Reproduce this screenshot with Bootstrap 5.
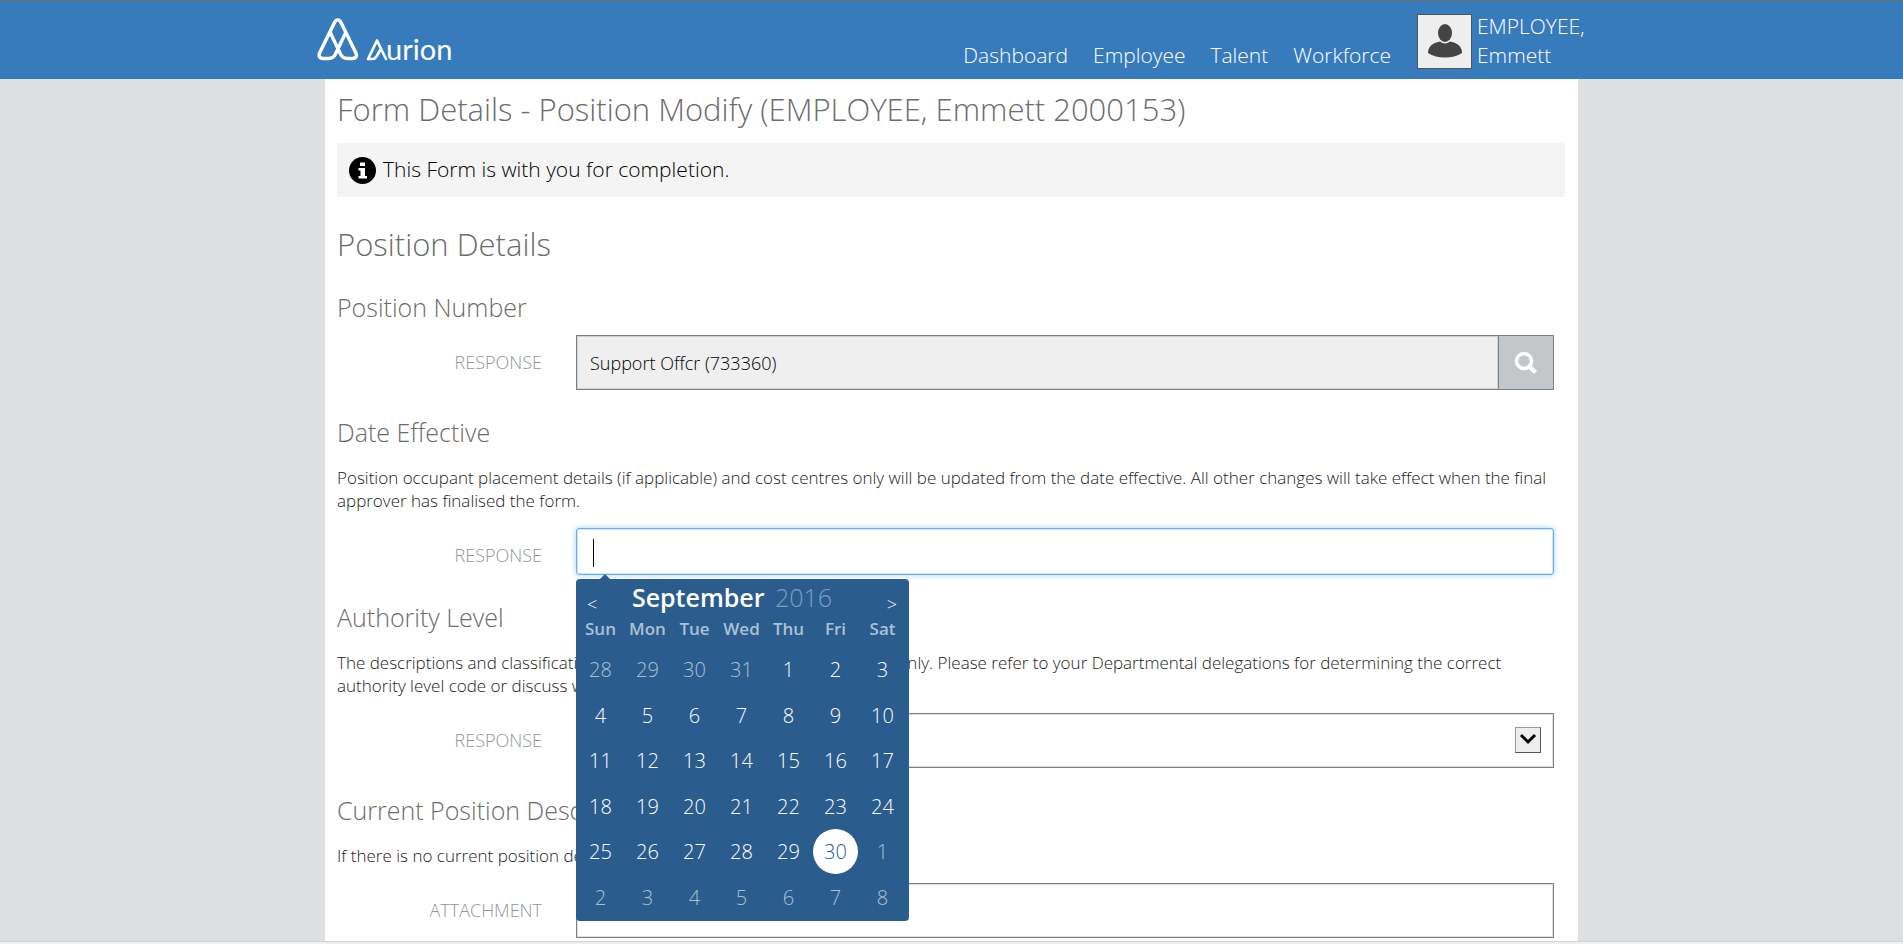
<!DOCTYPE html>
<html lang="en">
<head>
<meta charset="utf-8">
<meta name="viewport" content="width=device-width, initial-scale=1">
<title>Form Details - Position Modify</title>
<link href="https://cdn.jsdelivr.net/npm/bootstrap@5.3.0/dist/css/bootstrap.min.css" rel="stylesheet">
<style>
body{font-family:"Open Sans","Noto Sans",sans-serif;font-weight:300;background:#dedfe1;color:#222}
.site-bar{background:#387bbd;border-top:1px solid #6f6f6f;height:79px}
.wrap{width:100%;max-width:1253px}
.brand-link{color:#fff;margin:16px 0 0 -8px}
.brand-link svg{display:block}
.main-links{gap:25px;margin-right:26px;padding-top:40px}
.main-links a,.who{font-size:21px;line-height:29px;color:#fff;text-decoration:none}
.who{width:108px;margin-right:-7px;padding-top:11px}
.avatar{width:55px;height:55px;background:#eee;border:1px solid #555;margin:13px 5px 0 0}
.sheet{background:#fff;padding:0 13px 0 12px}
h1,h2,h3{color:#6c6c6c;font-weight:300;margin:0}
h1,h2{font-size:31px;line-height:44px}
h3{font-size:25px;line-height:36px}
h1{padding:8px 0 12px}
.notice{background:#f4f4f4;color:#000;font-size:21px;height:54px;padding:0 12px;gap:7px}
h2{margin:25px 0 23px}
.section p{font-size:17px;line-height:23px;margin:16px 0}
.section h3+.answer{margin-top:10px}
.section{margin-bottom:24px}
.answer{padding-right:11px}
.answer-label{width:239px;padding-right:34px;text-align:right;font-size:18px;color:#8f9599}
.answer-box{min-width:0}
.answer .form-control,.answer .form-select{height:55px;font-size:18px;font-weight:300;color:#000;border:1px solid #77818a;border-radius:0;padding:0 13px;box-shadow:inset 0 0 0 1px #dde0e3;background-color:#fff}
.answer .form-control[readonly]{background:#efefef;box-shadow:inset 0 0 0 1px #cfd2d4}
.answer .form-control.active-date{height:47px;border-color:#66afe9;border-radius:3px;box-shadow:inset 0 0 0 1px #d3e6f7,0 0 6px #a9d3f5}
.lookup{width:56px;background:#c3c7ca;border:1px solid #77818a;border-left:0;padding:0}
.answer .form-select{background-image:none}
.drop{position:absolute;right:13px;top:14px;width:26px;height:26px;pointer-events:none;background:#eee;border:1px solid #999;border-right-color:#555;border-bottom-color:#555}
.caret-line{position:absolute;left:17px;top:11px;width:1px;height:28px;background:#000}
.datepick{position:absolute;left:0;top:51px;z-index:5;width:333px;background:#2a5c8d;border-radius:4px;color:#fff;padding:0 2px 1px 1px}
.datepick::before{content:"";position:absolute;left:24px;top:-5px;border:5px solid transparent;border-top:0;border-bottom-color:#2a5c8d}
.month-row{height:36px;padding:0 10px}
.month-row button{background:none;border:0;color:#fff;padding:7px 0 0;font-size:18px;font-weight:300;line-height:36px}
.month-name{font-size:25px;line-height:37px;padding-right:20px}
.month-name b{font-weight:600;margin-right:4px}
.month-name span{color:#7f9fbe}
.days{width:329px;table-layout:fixed;margin:0;text-align:center;color:#fff}
.days th{font-size:17px;line-height:27px;font-weight:600;color:#abc1d6;padding:0}
.days tbody{border-top:5px solid #2a5c8d}
.days td{padding:0;height:45px}
.days tr:nth-child(even) td{height:46px}
.days td button{display:block;width:45px;height:45px;font-size:20px;line-height:45px;margin:0 auto;background:none;border:0;border-radius:50%;color:#fff;padding:0;font-weight:300}
.days td button.off{color:#a9c0d6}
.days td button.picked{background:#fff;color:#2a5c8d}
.status-strip{height:3px;background:#efefef;border-top:1px solid #d4d4d4}
.section.last-section{margin-bottom:2px}
</style>
</head>
<body class="d-flex flex-column min-vh-100">
<header class="site-bar">
  <div class="wrap mx-auto d-flex">
    <a href="#" class="brand-link me-auto" aria-label="Aurion">
      <svg width="136" height="50" viewBox="0 0 136 50" fill="none" stroke="#fff" stroke-linejoin="round" stroke-linecap="round">
        <path stroke-width="3.4" d="M17.5 5.5 2.8 35.5c-1.500 3.500-.5 6 3.200 6H12c3.500 0 5-1.500 6.500-4.500L28.500 16M24 5.500 38.700 35.500c1.500 3.500.5 6-3.200 6H30c-3.500 0-5-1.500-6.500-4.500L13.500 16M17.500 5.500c1.500-3.500 5-3.500 6.500 0"/>
        <path stroke-width="2.600" d="M69 42 60 23.500 51 42H55.500c2 0 3-1 4-2.500l4-7"/>
        <text x="69" y="43" fill="#fff" stroke="none" font-family="Lato, sans-serif" font-weight="400" font-size="29">urion</text>
      </svg>
    </a>
    <nav class="main-links d-flex">
      <a href="#">Dashboard</a><a href="#">Employee</a><a href="#">Talent</a><a href="#">Workforce</a>
    </nav>
    <svg class="avatar flex-shrink-0" viewBox="0 0 53 53" role="img" aria-label="Profile photo"><ellipse cx="27" cy="18" rx="7" ry="9" fill="#444"/><path fill="#444" d="M10 38c0-6 4-10 12-11.500 3 2.500 7 2.500 10 0 8 1.500 12 5.500 12 11.500-9 6-25 6-34 0z"/></svg>
    <a href="#" class="who">EMPLOYEE, Emmett</a>
  </div>
</header>
<main class="sheet wrap mx-auto flex-grow-1">
  <h1>Form Details - Position Modify (EMPLOYEE, Emmett 2000153)</h1>
  <div class="notice d-flex align-items-center" role="status">
    <svg width="27" height="27" viewBox="0 0 27 27"><circle cx="13.500" cy="13.500" r="13.500"/><path fill="#fff" d="M11 5.500h5v3.500h-5zM9.500 11h6.500v8h2v2.500H9.500V19h2v-5.500h-2z"/></svg>
    <span>This Form is with you for completion.</span>
  </div>
  <h2>Position Details</h2>

  <section class="section">
    <h3>Position Number</h3>
    <div class="answer d-flex align-items-center">
      <label class="answer-label flex-shrink-0" for="posNo">RESPONSE</label>
      <div class="answer-box input-group flex-grow-1">
        <input id="posNo" class="form-control" type="text" readonly value="Support Offcr (733360)">
        <button class="lookup" type="button" aria-label="Search"><svg width="24" height="24" viewBox="0 0 24 24" fill="none" stroke="#fff"><circle cx="10" cy="10" r="7.500" stroke-width="3.500"/><path d="m15.500 15.500 6 6" stroke-width="4.500"/></svg></button>
      </div>
    </div>
  </section>

  <section class="section">
    <h3>Date Effective</h3>
    <p>Position occupant placement details (if applicable) and cost centres only will be updated from the date effective. All other changes will take effect when the final approver has finalised the form.</p>
    <div class="answer d-flex align-items-center">
      <label class="answer-label flex-shrink-0 pt-2" for="dateEff">RESPONSE</label>
      <div class="answer-box position-relative flex-grow-1">
        <input id="dateEff" class="form-control active-date" type="text">
        <span class="caret-line"></span>
        <div class="datepick">
          <div class="month-row d-flex justify-content-between">
            <button type="button" aria-label="Previous month">&lt;</button>
            <div class="month-name"><b>September</b> <span>2016</span></div>
            <button type="button" aria-label="Next month">&gt;</button>
          </div>
          <table class="days">
            <thead><tr><th>Sun</th><th>Mon</th><th>Tue</th><th>Wed</th><th>Thu</th><th>Fri</th><th>Sat</th></tr></thead>
            <tbody id="dayRows"></tbody>
          </table>
        </div>
      </div>
    </div>
  </section>

  <section class="section">
    <h3>Authority Level</h3>
    <p>The descriptions and classifications shown below are provided as a guide only. Please refer to your Departmental delegations for determining the correct authority level code or discuss with your manager.</p>
    <div class="answer d-flex align-items-center">
      <label class="answer-label flex-shrink-0" for="authLevel">RESPONSE</label>
      <div class="answer-box position-relative flex-grow-1">
        <select id="authLevel" class="form-select"><option></option></select>
        <svg class="drop" viewBox="0 0 24 24" fill="none" stroke="#000" stroke-width="3"><path d="m5 7 7 7 7-7"/></svg>
      </div>
    </div>
  </section>

  <section class="section last-section">
    <h3>Current Position Description</h3>
    <p>If there is no current position description, please add one.</p>
    <div class="answer d-flex align-items-center">
      <label class="answer-label flex-shrink-0" for="attach">ATTACHMENT</label>
      <div class="answer-box flex-grow-1"><input id="attach" class="form-control" type="text"></div>
    </div>
  </section>
</main>
<footer class="status-strip"></footer>
<script>
// Six weeks from Sunday 28 August 2016
const rows = document.getElementById('dayRows');
const day = new Date(2016, 7, 28);
for (let w = 0; w < 6; w++) {
  const tr = rows.insertRow();
  for (let d = 0; d < 7; d++) {
    const b = document.createElement('button');
    b.type = 'button';
    b.textContent = day.getDate();
    if (day.getMonth() !== 8) b.className = 'off';
    else if (day.getDate() === 30) b.className = 'picked';
    tr.insertCell().append(b);
    day.setDate(day.getDate() + 1);
  }
}
</script>
<script src="https://cdn.jsdelivr.net/npm/bootstrap@5.3.0/dist/js/bootstrap.bundle.min.js"></script>
</body>
</html>
